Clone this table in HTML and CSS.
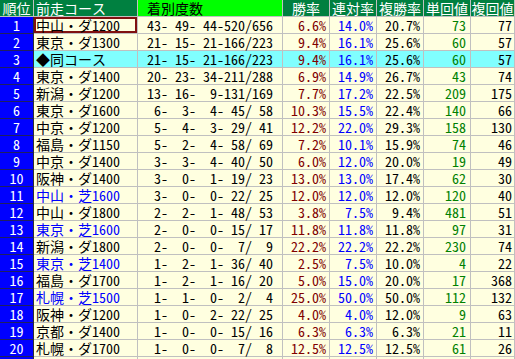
FILE: index.html
```html
<!DOCTYPE html>
<html lang="ja">
  <head>
    <meta charset="UTF-8" />
    <title>前走コース別成績</title>
    <link rel="stylesheet" href="styles.css">
  </head>
  <body>
    <table class="stats">
      <colgroup>
        <col class="c-rank">
        <col class="c-course">
        <col class="c-record">
        <col class="c-rate">
        <col class="c-rate">
        <col class="c-rate">
        <col class="c-rate">
        <col class="c-last">
      </colgroup>
      <thead>
        <tr>
          <th class="h-rank">順位</th>
          <th class="h-course">前走コース</th>
          <th class="h-record">着別度数</th>
          <th>勝率</th>
          <th>連対率</th>
          <th>複勝率</th>
          <th>単回値</th>
          <th>複回値</th>
        </tr>
      </thead>
      <tbody>
        <tr><td class="rank">1</td><td class="course selected">中山・ダ1200</td><td class="record">43- 49- 44-520/656</td><td class="win">6.6%</td><td class="ren">14.0%</td><td class="fuku">20.7%</td><td class="tan">73</td><td class="fkv">77</td></tr>
        <tr><td class="rank">2</td><td class="course">東京・ダ1300</td><td class="record">21- 15- 21-166/223</td><td class="win">9.4%</td><td class="ren">16.1%</td><td class="fuku">25.6%</td><td class="tan">60</td><td class="fkv">57</td></tr>
        <tr class="same"><td class="rank">3</td><td class="course">◆同コース</td><td class="record">21- 15- 21-166/223</td><td class="win">9.4%</td><td class="ren">16.1%</td><td class="fuku">25.6%</td><td class="tan">60</td><td class="fkv">57</td></tr>
        <tr><td class="rank">4</td><td class="course">東京・ダ1400</td><td class="record">20- 23- 34-211/288</td><td class="win">6.9%</td><td class="ren">14.9%</td><td class="fuku">26.7%</td><td class="tan">43</td><td class="fkv">74</td></tr>
        <tr><td class="rank">5</td><td class="course">新潟・ダ1200</td><td class="record">13- 16-  9-131/169</td><td class="win">7.7%</td><td class="ren">17.2%</td><td class="fuku">22.5%</td><td class="tan">209</td><td class="fkv">175</td></tr>
        <tr><td class="rank">6</td><td class="course">東京・ダ1600</td><td class="record"> 6-  3-  4- 45/ 58</td><td class="win">10.3%</td><td class="ren">15.5%</td><td class="fuku">22.4%</td><td class="tan">140</td><td class="fkv">66</td></tr>
        <tr><td class="rank">7</td><td class="course">中京・ダ1200</td><td class="record"> 5-  4-  3- 29/ 41</td><td class="win">12.2%</td><td class="ren">22.0%</td><td class="fuku">29.3%</td><td class="tan">158</td><td class="fkv">130</td></tr>
        <tr><td class="rank">8</td><td class="course">福島・ダ1150</td><td class="record"> 5-  2-  4- 58/ 69</td><td class="win">7.2%</td><td class="ren">10.1%</td><td class="fuku">15.9%</td><td class="tan">74</td><td class="fkv">46</td></tr>
        <tr><td class="rank">9</td><td class="course">中京・ダ1400</td><td class="record"> 3-  3-  4- 40/ 50</td><td class="win">6.0%</td><td class="ren">12.0%</td><td class="fuku">20.0%</td><td class="tan">19</td><td class="fkv">49</td></tr>
        <tr><td class="rank">10</td><td class="course">阪神・ダ1400</td><td class="record"> 3-  0-  1- 19/ 23</td><td class="win">13.0%</td><td class="ren">13.0%</td><td class="fuku">17.4%</td><td class="tan">62</td><td class="fkv">30</td></tr>
        <tr><td class="rank">11</td><td class="course turf">中山・芝1600</td><td class="record"> 3-  0-  0- 22/ 25</td><td class="win">12.0%</td><td class="ren">12.0%</td><td class="fuku">12.0%</td><td class="tan">120</td><td class="fkv">40</td></tr>
        <tr><td class="rank">12</td><td class="course">中山・ダ1800</td><td class="record"> 2-  2-  1- 48/ 53</td><td class="win">3.8%</td><td class="ren">7.5%</td><td class="fuku">9.4%</td><td class="tan">481</td><td class="fkv">51</td></tr>
        <tr><td class="rank">13</td><td class="course turf">東京・芝1600</td><td class="record"> 2-  0-  0- 15/ 17</td><td class="win">11.8%</td><td class="ren">11.8%</td><td class="fuku">11.8%</td><td class="tan">97</td><td class="fkv">31</td></tr>
        <tr><td class="rank">14</td><td class="course">新潟・ダ1800</td><td class="record"> 2-  0-  0-  7/  9</td><td class="win">22.2%</td><td class="ren">22.2%</td><td class="fuku">22.2%</td><td class="tan">230</td><td class="fkv">74</td></tr>
        <tr><td class="rank">15</td><td class="course turf">東京・芝1400</td><td class="record"> 1-  2-  1- 36/ 40</td><td class="win">2.5%</td><td class="ren">7.5%</td><td class="fuku">10.0%</td><td class="tan">4</td><td class="fkv">22</td></tr>
        <tr><td class="rank">16</td><td class="course">福島・ダ1700</td><td class="record"> 1-  2-  1- 16/ 20</td><td class="win">5.0%</td><td class="ren">15.0%</td><td class="fuku">20.0%</td><td class="tan">17</td><td class="fkv">368</td></tr>
        <tr><td class="rank">17</td><td class="course turf">札幌・芝1500</td><td class="record"> 1-  1-  0-  2/  4</td><td class="win">25.0%</td><td class="ren">50.0%</td><td class="fuku">50.0%</td><td class="tan">112</td><td class="fkv">132</td></tr>
        <tr><td class="rank">18</td><td class="course">阪神・ダ1200</td><td class="record"> 1-  0-  2- 22/ 25</td><td class="win">4.0%</td><td class="ren">4.0%</td><td class="fuku">12.0%</td><td class="tan">9</td><td class="fkv">63</td></tr>
        <tr><td class="rank">19</td><td class="course">京都・ダ1400</td><td class="record"> 1-  0-  0- 15/ 16</td><td class="win">6.3%</td><td class="ren">6.3%</td><td class="fuku">6.3%</td><td class="tan">21</td><td class="fkv">11</td></tr>
        <tr><td class="rank">20</td><td class="course">札幌・ダ1700</td><td class="record"> 1-  0-  0-  7/  8</td><td class="win">12.5%</td><td class="ren">12.5%</td><td class="fuku">12.5%</td><td class="tan">61</td><td class="fkv">26</td></tr>
        <tr class="cut"><td class="rank"></td><td></td><td></td><td></td><td></td><td></td><td></td><td></td></tr>
      </tbody>
    </table>
  </body>
</html>
```

FILE: styles.css
```css
body {
  margin: 0;
  background: #ffffff;
  overflow: hidden;
  font-family: "Noto Sans Mono CJK JP", "Noto Sans CJK JP", "DejaVu Sans Mono", monospace;
  font-size: 14px;
}
.stats {
  border-collapse: separate;
  border-spacing: 0;
  table-layout: fixed;
  width: 515px;
}
.c-rank {
  width: 34px;
}
.c-course {
  width: 104px;
}
.c-record {
  width: 145px;
}
.c-rate {
  width: 47px;
}
.c-last {
  width: 44px;
}
th,
td {
  box-sizing: border-box;
  height: 17px;
  padding: 0 3px 0 0;
  line-height: 16px;
  white-space: pre;
  border-right: 1px solid #c0c0c0;
  border-bottom: 1px solid #c0c0c0;
  background: #ffffe0;
  text-align: right;
  font-weight: normal;
}
th {
  background: #008040;
  color: #ffffff;
  text-align: center;
  padding: 0;
}
th.h-course {
  text-align: left;
  padding-left: 2px;
}
th.h-record {
  background: #00ff00;
  color: #000000;
  text-align: left;
  padding-left: 9px;
}
td.rank {
  background: #0000ff;
  color: #ffffff;
  text-align: center;
  padding: 0;
  border-right-color: #303030;
  border-bottom-color: #202060;
}
td.course {
  text-align: left;
  padding-left: 2px;
  color: #000000;
}
td.turf {
  color: #0000ff;
}
td.selected {
  box-shadow: inset 0 0 0 2px #801010;
}
td.record {
  text-align: left;
  padding-left: 9px;
}
td.win {
  color: #800000;
}
td.ren {
  color: #0000ff;
}
td.fuku {
  color: #000000;
}
td.tan {
  color: #008000;
  padding-right: 4px;
}
td.fkv {
  color: #000000;
  padding-right: 2px;
}
tr.same td {
  background: #80ffff;
}
tr.same td.rank {
  background: #0000ff;
}
```
